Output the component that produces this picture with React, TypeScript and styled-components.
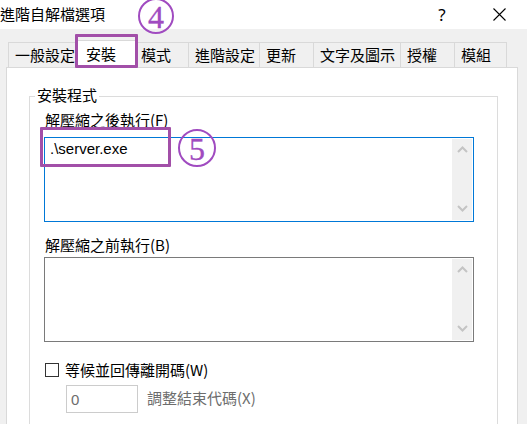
import React from "react";
import styled, { createGlobalStyle } from "styled-components";

const GlobalStyle = createGlobalStyle`
  html, body { margin: 0; padding: 0; background: #f0f0f0; }
  body { font-family: "Noto Sans CJK TC", "Noto Sans", sans-serif; color: #000; overflow: hidden; }
  * { box-sizing: border-box; }
`;

const CJK = `"Noto Sans CJK TC", "Noto Sans", sans-serif`;
const ANNOT = "#a24fa8";

const Window = styled.div`
  position: relative;
  width: 527px;
  height: 424px;
  overflow: hidden;
  background: #f0f0f0;
`;

const TitleBar = styled.div`
  height: 29px;
  background: #fff;
  display: flex;
  align-items: center;
  justify-content: space-between;
`;

const TitleText = styled.div`
  font-family: ${CJK};
  font-size: 15px;
  line-height: 20px;
  margin-top: -1px;
`;

const TitleButtons = styled.div`
  display: flex;
  gap: 11px;
  margin-right: 5px;
`;

const TitleButton = styled.div`
  width: 46px;
  height: 29px;
  display: flex;
  align-items: center;
  justify-content: center;
  font-family: "Noto Sans", sans-serif;
  font-size: 17px;
  color: #000;
`;

const TabStrip = styled.div`
  display: flex;
  align-items: flex-end;
  margin: 11px 0 0 8px;
  position: relative;
  z-index: 1;
`;

const Tab = styled.div<{ $w: number; $active?: boolean; $last?: boolean; $pl?: number }>`
  width: ${(p) => p.$w}px;
  height: ${(p) => (p.$active ? 28 : 25)}px;
  margin: ${(p) => (p.$active ? "0 -2px -1px -2px" : "0")};
  background: ${(p) => (p.$active ? "#fff" : "#f0f0f0")};
  border-top: 1px solid #d9d9d9;
  border-left: 1px solid #d9d9d9;
  border-right: ${(p) => (p.$active || p.$last ? "1px solid #d9d9d9" : "none")};
  padding-left: ${(p) => p.$pl ?? 6}px;
  padding-bottom: ${(p) => (p.$active ? 2 : 0)}px;
  font-family: ${CJK};
  font-size: 15px;
  line-height: 24px;
  white-space: nowrap;
  position: relative;
  z-index: ${(p) => (p.$active ? 2 : 1)};
  display: flex;
  align-items: center;
`;

const Panel = styled.div`
  margin: 0 9px 0 6px;
  height: 400px;
  background: #fff;
  border: 1px solid #d9d9d9;
  padding-top: 28px;
`;

const GroupBox = styled.div`
  margin: 0 19px 0 22px;
  border: 1px solid #dcdcdc;
  border-bottom: none;
  padding: 0 0 0 14px;
  height: 360px;
`;

const Legend = styled.div`
  display: block;
  width: fit-content;
  margin: -12px 0 0 -9px;
  padding: 0 2px;
  background: #fff;
  font-family: ${CJK};
  font-size: 15px;
  line-height: 20px;
`;

const FieldLabel = styled.div<{ $mt: number }>`
  margin-top: ${(p) => p.$mt}px;
  padding-left: 1px;
  font-family: ${CJK};
  font-size: 15px;
  line-height: 20px;
  color: #000;
`;

const TextBox = styled.div<{ $focused?: boolean; $mt: number }>`
  margin-top: ${(p) => p.$mt}px;
  width: 430px;
  height: 85px;
  border: 1px solid ${(p) => (p.$focused ? "#0078d7" : "#7a7a7a")};
  background: #fff;
  display: flex;
`;

const TextContent = styled.div`
  flex: 1;
  padding: 1px 0 0 5px;
  font-family: "Liberation Sans", Arial, sans-serif;
  font-size: 15px;
  line-height: 20px;
`;

const ScrollTrack = styled.div`
  width: 20px;
  margin: 1px 1px 1px 0;
  background: #f0f0f0;
  display: flex;
  flex-direction: column;
  justify-content: space-between;
  align-items: center;
  padding: 7px 0 8px;
`;

const CheckRow = styled.div`
  margin-top: 18px;
  display: flex;
  align-items: center;
  height: 20px;
  padding-left: 1px;
`;

const CheckBox = styled.div`
  width: 14px;
  height: 14px;
  border: 1px solid #333;
  background: #fff;
  margin-right: 6px;
`;

const CheckLabel = styled.span`
  font-family: ${CJK};
  font-size: 15px;
  line-height: 20px;
`;

const InputRow = styled.div`
  margin: 5px 0 0 22px;
  display: flex;
  align-items: center;
  gap: 9px;
`;

const SmallInput = styled.div`
  width: 72px;
  height: 28px;
  border: 1px solid #cccccc;
  padding-left: 4px;
  display: flex;
  align-items: center;
  font-family: "Liberation Sans", Arial, sans-serif;
  font-size: 15px;
  color: #6d6d6d;
`;

const DisabledLabel = styled.span`
  font-family: ${CJK};
  font-size: 15px;
  line-height: 20px;
  color: #6d6d6d;
  margin-top: -3px;
`;

const HighlightBox = styled.div<{ $x: number; $y: number; $w: number; $h: number }>`
  position: absolute;
  left: ${(p) => p.$x}px;
  top: ${(p) => p.$y}px;
  width: ${(p) => p.$w}px;
  height: ${(p) => p.$h}px;
  border: 3px solid ${ANNOT};
  border-radius: 1px;
  z-index: 5;
`;

const CircleNum = styled.div<{ $x: number; $y: number; $d: number }>`
  position: absolute;
  left: ${(p) => p.$x}px;
  top: ${(p) => p.$y}px;
  width: ${(p) => p.$d}px;
  height: ${(p) => p.$d}px;
  border: 2px solid #a04bc0;
  border-radius: 50%;
  display: flex;
  align-items: center;
  justify-content: center;
  font-family: "Liberation Serif", "Times New Roman", serif;
  font-size: 32px;
  line-height: 30px;
  color: #a04bc0;
  -webkit-text-stroke: 0.3px #a04bc0;
  padding-top: 1px;
  z-index: 5;
`;

const Chevron = ({ up }: { up?: boolean }) => (
  <svg width="11" height="7" viewBox="0 0 11 7">
    <path
      d={up ? "M1 6 L5.5 1.5 L10 6" : "M1 1 L5.5 5.5 L10 1"}
      fill="none"
      stroke="#c4c4c4"
      strokeWidth="2"
    />
  </svg>
);

const CloseIcon = () => (
  <svg width="13" height="13" viewBox="0 0 13 13">
    <path d="M0.5 0.5 L12.5 12.5 M12.5 0.5 L0.5 12.5" stroke="#000" strokeWidth="1.1" />
  </svg>
);

const tabs = [
  { label: "一般設定", w: 69 },
  { label: "安裝", w: 61, active: true, pl: 10 },
  { label: "模式", w: 54 },
  { label: "進階設定", w: 71 },
  { label: "更新", w: 54 },
  { label: "文字及圖示", w: 87 },
  { label: "授權", w: 54 },
  { label: "模組", w: 53, last: true },
];

export default function App() {
  return (
    <Window>
      <GlobalStyle />
      <TitleBar>
        <TitleText>進階自解檔選項</TitleText>
        <TitleButtons>
          <TitleButton>?</TitleButton>
          <TitleButton>
            <CloseIcon />
          </TitleButton>
        </TitleButtons>
      </TitleBar>
      <TabStrip>
        {tabs.map((t) => (
          <Tab key={t.label} $w={t.w} $active={t.active} $last={t.last} $pl={t.pl}>
            {t.label}
          </Tab>
        ))}
      </TabStrip>
      <Panel>
        <GroupBox>
          <Legend>安裝程式</Legend>
          <FieldLabel $mt={5}>解壓縮之後執行(F)</FieldLabel>
          <TextBox $focused $mt={7}>
            <TextContent>.\server.exe</TextContent>
            <ScrollTrack>
              <Chevron up />
              <Chevron />
            </ScrollTrack>
          </TextBox>
          <FieldLabel $mt={13}>解壓縮之前執行(B)</FieldLabel>
          <TextBox $mt={2}>
            <TextContent />
            <ScrollTrack>
              <Chevron up />
              <Chevron />
            </ScrollTrack>
          </TextBox>
          <CheckRow>
            <CheckBox />
            <CheckLabel>等候並回傳離開碼(W)</CheckLabel>
          </CheckRow>
          <InputRow>
            <SmallInput>0</SmallInput>
            <DisabledLabel>調整結束代碼(X)</DisabledLabel>
          </InputRow>
        </GroupBox>
      </Panel>
      <CircleNum $x={138} $y={-2} $d={36}>4</CircleNum>
      <HighlightBox $x={75} $y={34} $w={63} $h={34} />
      <HighlightBox $x={40} $y={127} $w={131} $h={40} />
      <CircleNum $x={178} $y={129} $d={38}>5</CircleNum>
    </Window>
  );
}
